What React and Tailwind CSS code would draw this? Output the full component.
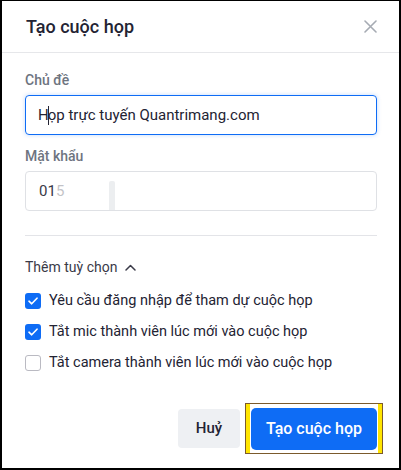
const options = [
  { label: 'Yêu cầu đăng nhập để tham dự cuộc họp', checked: true },
  { label: 'Tắt mic thành viên lúc mới vào cuộc họp', checked: true },
  { label: 'Tắt camera thành viên lúc mới vào cuộc họp', checked: false },
]

function CheckBox({ checked }) {
  if (!checked) {
    return <span className="h-4 w-4 shrink-0 rounded-[3px] border border-[#babac2] bg-white" />
  }
  return (
    <span className="grid h-4 w-4 shrink-0 place-items-center rounded-[3px] bg-[#0e6cf5]">
      <svg width="10" height="8" viewBox="0 0 10 8" fill="none">
        <path d="M1 4.2 3.7 6.8 9 1.2" stroke="white" strokeWidth="1.6" strokeLinecap="round" strokeLinejoin="round" />
      </svg>
    </span>
  )
}

export default function App() {
  return (
    <div
      className="h-[470px] w-[401px] overflow-hidden border-b-2 border-l-2 border-r-2 border-t border-black bg-white text-[#232333]"
      style={{ fontFamily: 'Roboto, "Noto Sans", sans-serif' }}
    >
      <header className="flex h-[52px] items-center justify-between border-b border-[#e6e7ea] pl-[24px] pr-[22px]">
        <h1 className="text-[18px] font-medium">Tạo cuộc họp</h1>
        <svg width="13" height="13" viewBox="0 0 13 13" fill="none">
          <path d="M1 1 12 12M12 1 1 12" stroke="#a6abb3" strokeWidth="1.6" strokeLinecap="round" />
        </svg>
      </header>

      <div className="pl-[23px] pr-[22px] pt-[17px]">
        <p className="text-[14px] font-medium leading-5 text-[#6e7480]">Chủ đề</p>
        <div className="mt-[5px] flex h-[40px] items-center rounded-[4px] border border-[#0e6cf5] px-[12px] shadow-[0_0_4px_rgba(14,108,245,0.25)]">
          <span className="text-[15px] text-[#232333]">H</span>
          <span className="mx-[-1px] h-[19px] w-px bg-[#232333]" />
          <span className="text-[15px] text-[#232333]">ọp trực tuyến Quantrimang.com</span>
        </div>

        <p className="mt-[11px] text-[14px] font-medium leading-5 text-[#6e7480]">Mật khẩu</p>
        <div className="mt-[5px] flex h-[40px] items-center rounded-[4px] border border-[#dfe1e5] px-[13px]">
          <span className="text-[15px] text-[#3a3a48]">01</span>
          <span className="text-[15px] text-[#3a3a48] opacity-30">5</span>
          <span className="ml-[45px] h-[29px] w-[6px] self-end rounded-t-[2px] bg-[#eceef0]" />
        </div>

        <div className="mt-[24px] border-t border-[#e3e4e8]" />

        <div className="mt-[21px] flex items-center gap-[8px] text-[14px] leading-5 text-[#3a3a48]">
          <span>Thêm tuỳ chọn</span>
          <svg width="11" height="7" viewBox="0 0 11 7" fill="none">
            <path d="M1 6 5.5 1.5 10 6" stroke="#3a3a48" strokeWidth="1.5" strokeLinecap="round" strokeLinejoin="round" />
          </svg>
        </div>

        <div className="mt-[14px] space-y-[11px]">
          {options.map((o) => (
            <div key={o.label} className="flex items-center gap-[8px] text-[14.5px] leading-5">
              <CheckBox checked={o.checked} />
              <span>{o.label}</span>
            </div>
          ))}
        </div>

        <div className="mt-[30px] flex items-center justify-end gap-[5px]">
          <button className="h-[39px] w-[62px] rounded-[4px] bg-[#eef0f3] text-[15px] font-medium text-[#232333]">
            Huỷ
          </button>
          <div className="mr-[-6px] flex h-[51px] items-stretch border border-[#7b5a2c] bg-white">
            <span className="w-[4px] bg-[#ffe500]" />
            <div className="flex items-center px-px">
              <button className="h-[42px] w-[126px] rounded-[5px] bg-[#0e6cf5] text-[16px] font-medium text-white">
                Tạo cuộc họp
              </button>
            </div>
            <span className="w-[4px] bg-[#ffe500]" />
          </div>
        </div>
      </div>
    </div>
  )
}
